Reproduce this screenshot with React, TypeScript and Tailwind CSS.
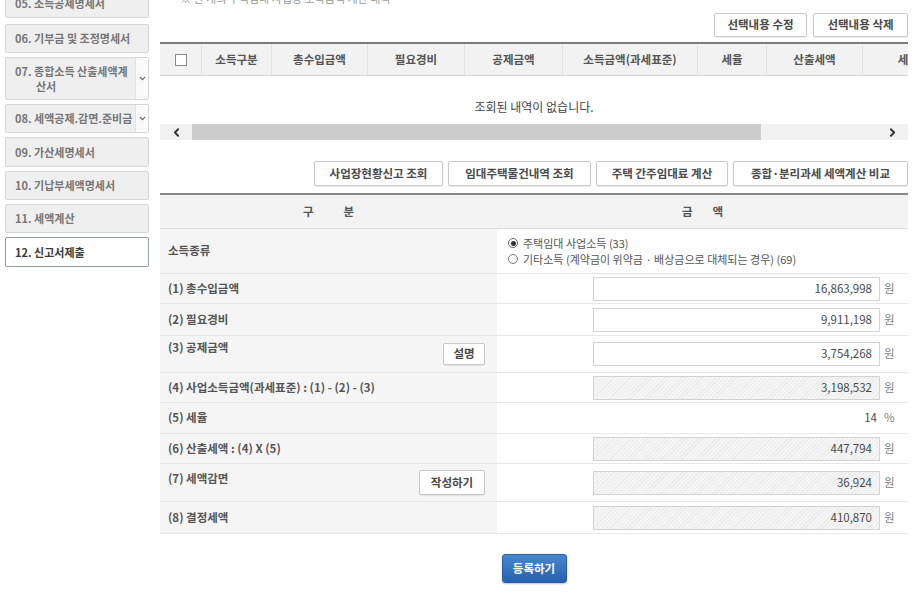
import React from "react";
import { ChevronDown, ChevronLeft, ChevronRight } from "lucide-react";

const FONT = { fontFamily: '"Noto Sans CJK KR", "Noto Sans", sans-serif' };

const hatch =
  "bg-[repeating-linear-gradient(135deg,#f5f5f5_0px,#f5f5f5_2px,#ebebeb_2px,#ebebeb_3px)]";

function SideItem({
  label,
  h = "h-[29px]",
  active = false,
  dropdown = false,
  twoLine,
}: {
  label: string;
  h?: string;
  active?: boolean;
  dropdown?: boolean;
  twoLine?: string;
}) {
  return (
    <div
      className={`flex w-[144px] ${h} rounded-[2px] border ${
        active ? "border-[#8e9aa6] bg-white text-[#3a3a3a]" : "border-[#d6d6d6] bg-[#efefef] text-[#767676]"
      } text-[11px] font-bold`}
    >
      <div className="flex flex-1 flex-col justify-center pl-[9px] leading-[15px] overflow-hidden whitespace-nowrap">
        <span>{label}</span>
        {twoLine && <span className="pl-[21px]">{twoLine}</span>}
      </div>
      {dropdown && (
        <div className="flex w-[13px] items-center justify-center border-l border-[#e2e2e2] bg-[#fafafa]">
          <ChevronDown size={9} strokeWidth={3.5} color="#666" />
        </div>
      )}
    </div>
  );
}

function Btn({ children, w, h = "h-[24px]" }: { children: React.ReactNode; w: string; h?: string }) {
  return (
    <div
      className={`${w} ${h} flex items-center justify-center rounded-[2px] border border-[#c9c9c9] bg-white text-[11.5px] font-bold text-[#4a4a4a] shadow-[0_1px_1px_rgba(0,0,0,0.08)]`}
    >
      {children}
    </div>
  );
}

function Amount({ value, readOnly = false }: { value: string; readOnly?: boolean }) {
  return (
    <div className="flex items-center">
      <div
        className={`flex h-[24px] w-[287px] items-center justify-end border border-[#d3d3d3] pr-[7px] text-[11.5px] text-[#4a4a4a] ${
          readOnly ? hatch : "bg-white"
        }`}
      >
        {value}
      </div>
      <span className="w-[28px] pl-[4px] text-[11.5px] text-[#808080]">원</span>
    </div>
  );
}

function Row({
  h,
  label,
  labelAlign = "center",
  labelPt = "",
  button,
  value,
}: {
  h: string;
  label: string;
  labelAlign?: "center" | "top";
  labelPt?: string;
  button?: React.ReactNode;
  value: React.ReactNode;
}) {
  return (
    <div className={`flex ${h} border-b border-[#e8e8e8]`}>
      <div className="flex w-[337px] items-center justify-between bg-[#f5f5f5] pl-[8px] pr-[12px]">
        <span
          className={`text-[11.5px] font-bold text-[#555] ${labelAlign === "top" ? `self-start ${labelPt}` : ""}`}
        >
          {label}
        </span>
        {button}
      </div>
      <div className="flex flex-1 items-center justify-end bg-white">{value}</div>
    </div>
  );
}

export default function App() {
  const cols: [string, string][] = [
    ["w-[42px]", ""],
    ["w-[70px]", "소득구분"],
    ["w-[96px]", "총수입금액"],
    ["w-[97px]", "필요경비"],
    ["w-[98px]", "공제금액"],
    ["w-[135px]", "소득금액(과세표준)"],
    ["w-[69px]", "세율"],
    ["w-[96px]", "산출세액"],
    ["w-[112px]", "세액감면"],
  ];

  return (
    <div className="flex h-[593px] w-[916px] overflow-hidden bg-white" style={FONT}>
      {/* Sidebar */}
      <div className="flex w-[160px] shrink-0 flex-col gap-[4px] pl-[5px]">
        <div className="mt-[-11px] mb-[2px]">
          <SideItem label="05. 소득공제명세서" />
        </div>
        <SideItem label="06. 기부금 및 조정명세서" />
        <SideItem label="07. 종합소득 산출세액계" twoLine="산서" h="h-[43px]" dropdown />
        <SideItem label="08. 세액공제.감면.준비금" dropdown />
        <SideItem label="09. 가산세명세서" h="h-[30px]" />
        <SideItem label="10. 기납부세액명세서" />
        <SideItem label="11. 세액계산" />
        <SideItem label="12. 신고서제출" h="h-[30px]" active />
      </div>

      {/* Main */}
      <div className="flex w-[748px] flex-col">
        <div className="h-[6px] overflow-hidden pl-[20px]">
          <div className="mt-[-9px] text-[11px] leading-[14px] text-[#999]">
            ※ 한 개의 주택임대 사업장 소득금액 계산 내역
          </div>
        </div>

        <div className="mt-[7px] flex justify-end gap-[6px]">
          <Btn w="w-[93px]">선택내용 수정</Btn>
          <Btn w="w-[95px]">선택내용 삭제</Btn>
        </div>

        {/* Table 1 */}
        <div className="mt-[5px] overflow-hidden border-t-2 border-[#7b7b7b]">
          <div className="flex h-[32px] w-[820px] items-center border-b border-[#d6d6d6] bg-[#f2f2f2] text-[11.5px] font-bold text-[#555]">
            {cols.map(([w, t], i) => (
              <div
                key={i}
                className={`${w} flex h-full shrink-0 items-center justify-center ${
                  i < cols.length - 1 ? "border-r border-[#e2e2e2]" : ""
                }`}
              >
                {i === 0 ? (
                  <div className="h-[12px] w-[12px] border border-[#8a8a8a] bg-white" />
                ) : (
                  t
                )}
              </div>
            ))}
          </div>
        </div>
        <div className="flex h-[48px] items-start justify-center pt-[22px] text-[12px] leading-[17px] text-[#444]">
          조회된 내역이 없습니다.
        </div>
        <div className="flex h-[16px] items-center bg-[#f1f1f1]">
          <div className="flex w-[32px] items-center justify-center">
            <ChevronLeft size={13} strokeWidth={3.5} color="#333" />
          </div>
          <div className="h-full w-[569px] bg-[#cdcdcd]" />
          <div className="flex-1" />
          <div className="flex w-[32px] items-center justify-center">
            <ChevronRight size={13} strokeWidth={3.5} color="#333" />
          </div>
        </div>

        <div className="mt-[21px] flex justify-end gap-[5px]">
          <Btn w="w-[129px]" h="h-[25px]">사업장현황신고 조회</Btn>
          <Btn w="w-[143px]" h="h-[25px]">임대주택물건내역 조회</Btn>
          <Btn w="w-[132px]" h="h-[25px]">주택 간주임대료 계산</Btn>
          <Btn w="w-[175px]" h="h-[25px]">종합·분리과세 세액계산 비교</Btn>
        </div>

        {/* Table 2 */}
        <div className="mt-[7px] border-t-2 border-[#888]">
          <div className="flex h-[34px] border-b border-[#dcdcdc] bg-[#f3f3f3] text-[11.5px] font-bold text-[#555]">
            <div className="flex w-[337px] items-center justify-center gap-[30px]">
              <span>구</span>
              <span>분</span>
            </div>
            <div className="flex flex-1 items-center justify-center gap-[20px]">
              <span>금</span>
              <span>액</span>
            </div>
          </div>

          <Row
            h="h-[45px]"
            label="소득종류"
            value={
              <div className="flex h-full w-full flex-col justify-center pl-[11px] text-[11px] leading-[16px] text-[#555]">
                <div className="flex items-center gap-[5px]">
                  <span className="flex h-[10px] w-[10px] items-center justify-center rounded-full border border-[#666] bg-white">
                    <span className="h-[5px] w-[5px] rounded-full bg-[#333]" />
                  </span>
                  <span>주택임대 사업소득 (33)</span>
                </div>
                <div className="flex items-center gap-[5px]">
                  <span className="h-[10px] w-[10px] rounded-full border border-[#777] bg-white" />
                  <span>기타소득 (계약금이 위약금 · 배상금으로 대체되는 경우) (69)</span>
                </div>
              </div>
            }
          />
          <Row h="h-[30px]" label="(1) 총수입금액" value={<Amount value="16,863,998" />} />
          <Row h="h-[32px]" label="(2) 필요경비" value={<Amount value="9,911,198" />} />
          <Row
            h="h-[37px]"
            label="(3) 공제금액"
            labelAlign="top"
            labelPt="pt-[3px]"
            button={<Btn w="w-[42px]" h="h-[22px]">설명</Btn>}
            value={<Amount value="3,754,268" />}
          />
          <Row
            h="h-[30px]"
            label="(4) 사업소득금액(과세표준) : (1) - (2) - (3)"
            value={<Amount value="3,198,532" readOnly />}
          />
          <Row
            h="h-[31px]"
            label="(5) 세율"
            value={
              <div className="flex items-center">
                <span className="pr-[3px] text-[11.5px] text-[#4a4a4a]">14</span>
                <span className="w-[28px] pl-[4px] text-[11.5px] text-[#808080]">%</span>
              </div>
            }
          />
          <Row h="h-[30px]" label="(6) 산출세액 : (4) X (5)" value={<Amount value="447,794" readOnly />} />
          <Row
            h="h-[38px]"
            label="(7) 세액감면"
            labelAlign="top"
            labelPt="pt-[6px]"
            button={<Btn w="w-[66px]" h="h-[25px]">작성하기</Btn>}
            value={<Amount value="36,924" readOnly />}
          />
          <Row h="h-[32px]" label="(8) 결정세액" value={<Amount value="410,870" readOnly />} />
        </div>

        <div className="mt-[20px] flex justify-center">
          <div className="flex h-[29px] w-[65px] items-center justify-center rounded-[3px] border border-[#2a5fa3] bg-gradient-to-b from-[#4a87d0] to-[#2660ae] text-[11.5px] font-bold text-white shadow-[0_1px_2px_rgba(0,0,0,0.25)]">
            등록하기
          </div>
        </div>
      </div>
    </div>
  );
}
